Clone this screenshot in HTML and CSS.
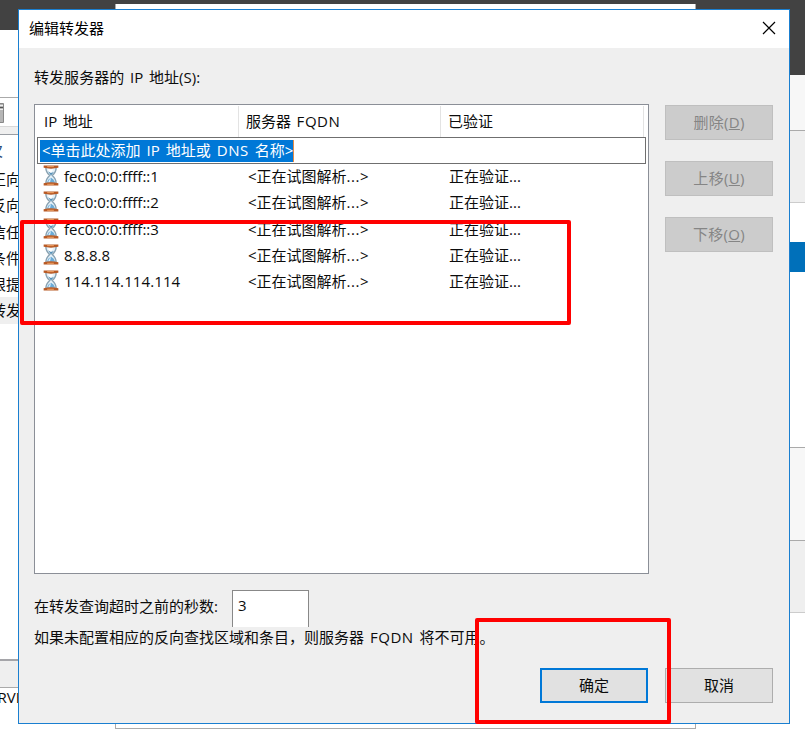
FILE: index.html
```html
<!DOCTYPE html>
<html lang="zh-CN">
<head>
<meta charset="utf-8">
<title>编辑转发器</title>
<link rel="stylesheet" href="styles.css">
</head>
<body>
<svg class="defs" width="0" height="0" aria-hidden="true">
  <symbol id="hourglass" viewBox="0 0 16 22">
    <path d="M2.6 2.5C2.6 7 4 8.600 6.600 11C4 13.400 2.600 15 2.600 19.500H13.400C13.400 15 12 13.400 9.400 11C12 8.600 13.400 7 13.400 2.500Z" fill="#e4f0f7" stroke="#8aa3b3" stroke-width="1.500"/>
    <path d="M4.500 4.500L7.500 9L10.500 4.500Z" fill="#fff"/>
    <path d="M5 6.800L8 11L11 7.300L8 8.400Z" fill="#568fb5"/>
    <path d="M3.600 18.500Q5 14.500 8 13.300Q11 14.500 12.400 18.500Z" fill="#6cabd6"/>
    <path d="M6 16Q7 14 8 13.600L7 18H5Z" fill="#d8edfa"/>
    <path d="M.3 .6H15.700V3Q8 4.600 .3 3Z" fill="#b85a25"/>
    <path d="M.3 21.400H15.700V19Q8 17.400 .3 19Z" fill="#b85a25"/>
    <path d="M4 1.700H11M4 20.200H11" stroke="#f0a468" stroke-width="1"/>
  </symbol>
</svg>
<div class="desktop">
  <div class="backdrop-bar"></div>
  <div class="back-left">
    <div class="bl-space"></div>
    <div class="bl-tools"><svg width="5" height="20" viewBox="0 0 5 20"><path d="M0 .5H3.500V19.500H0" fill="#b5b5b5" stroke="#888"/><path d="M0 2.500H3M0 6.500H3" stroke="#eee"/><path d="M0 4.500H3" stroke="#555"/></svg></div>
    <div class="bl-strip"></div>
    <div class="bl-tree">
      <div class="node lead"><span>欠</span></div>
      <div class="node"><span>正向</span></div>
      <div class="node"><span>反向</span></div>
      <div class="node"><span>信任</span></div>
      <div class="node"><span>条件</span></div>
      <div class="node"><span>根提</span></div>
      <div class="node current"><span>转发</span></div>
    </div>
    <div class="bl-status"></div>
    <div class="bl-name"><span>SERVER</span></div>
  </div>
  <div class="back-right">
    <div class="br-head"></div><div class="br-gray"></div><div class="br-white"></div><div class="br-blue"></div><div class="br-body"></div><div class="br-foot"></div><div class="br-base"></div>
  </div>
  <div class="parent-window"></div>

  <section class="dialog">
    <header class="titlebar">
      <span>编辑转发器</span>
      <svg width="14" height="14" viewBox="0 0 14 14"><path d="M1 1L13 13M13 1L1 13" stroke="#000" stroke-width="1.200"/></svg>
    </header>
    <div class="content">
      <div class="label">转发服务器的 IP 地址(S):</div>
      <div class="main">
        <div class="list">
          <div class="columns"><span>IP 地址</span><span>服务器 <b>FQDN</b></span><span>已验证</span></div>
          <div class="edit"><span>&lt;单击此处添加 IP 地址或 <b>DNS</b> 名称&gt;</span></div>
          <div class="row"><svg><use href="#hourglass"/></svg><span>fec0:0:0:ffff::1</span><span class="fq">&lt;正在试图解析<b>...</b>&gt;</span><span>正在验证...</span></div>
          <div class="row"><svg><use href="#hourglass"/></svg><span>fec0:0:0:ffff::2</span><span class="fq">&lt;正在试图解析<b>...</b>&gt;</span><span>正在验证...</span></div>
          <div class="row"><svg><use href="#hourglass"/></svg><span>fec0:0:0:ffff::3</span><span class="fq">&lt;正在试图解析<b>...</b>&gt;</span><span>正在验证...</span></div>
          <div class="row"><svg><use href="#hourglass"/></svg><span>8.8.8.8</span><span class="fq">&lt;正在试图解析<b>...</b>&gt;</span><span>正在验证...</span></div>
          <div class="row"><svg><use href="#hourglass"/></svg><span class="v4">114.114.114.114</span><span class="fq">&lt;正在试图解析<b>...</b>&gt;</span><span>正在验证...</span></div>
        </div>
        <div class="side">
          <button disabled>删除(<u>D</u>)</button>
          <button disabled>上移(<u>U</u>)</button>
          <button disabled>下移(<u>O</u>)</button>
        </div>
      </div>
      <div class="timeout"><span>在转发查询超时之前的秒数:</span><div class="seconds">3</div></div>
      <div class="note">如果未配置相应的反向查找区域和条目，则服务器 <b>FQDN</b> 将不可用。</div>
      <div class="actions"><button class="ok">确定</button><button>取消</button></div>
    </div>
  </section>
  <div class="mark mark-list"></div>
  <div class="mark mark-ok"></div>
</div>
</body>
</html>
```
FILE: styles.css
```css
* { box-sizing: border-box; }
body { margin: 0; font: 15px/20px "Open Sans", "Noto Sans CJK SC", sans-serif; color: #0c0c0c; }
b { font-weight: inherit; letter-spacing: .55px; }
.defs { position: absolute; }
.desktop { position: relative; width: 805px; height: 738px; overflow: hidden; background: #fff; }
.backdrop-bar { height: 30px; background: #424242; }

/* windows behind the dialog */
.back-left { position: absolute; left: 0; top: 30px; width: 18px; height: 708px; overflow: hidden; background: #fff; }
.bl-space { height: 67px; }
.bl-tools { height: 29px; border-top: 1px solid #aaa; padding-top: 5px; }
.bl-tools svg { display: block; }
.bl-strip { height: 9px; background: #efefef; border-top: 1px solid #d8d8d8; border-bottom: 1px solid #999da3; }
.bl-tree { height: 524px; padding-top: 2px; }
.node { height: 26.3px; line-height: 26px; white-space: nowrap; }
.node span { margin-left: -9px; }
.node.lead { color: #2a4a7a; height: 29px; line-height: 27px; }
.node.lead span { margin-left: -12px; }
.current { background: #efefef; }
.bl-status { height: 29px; background: #efefef; border-top: 2px solid #a5a5a9; border-bottom: 1px solid #aaa; }
.bl-name { white-space: nowrap; line-height: 18px; }
.bl-name span { margin-left: -19px; }

.back-right { position: absolute; left: 790px; top: 0; width: 15px; height: 738px; background: #fff; }
.back-right div { border-bottom: 1px solid #aaa; }
.back-right .br-head { height: 131px; border-top: 75px solid #424242; background: #f7f7f7; }
.back-right .br-gray { height: 72px; background: #efefef; border-color: #ccc; }
.back-right .br-white { height: 39px; border: 0; }
.back-right .br-blue { height: 30px; background: #0070ba; border: 0; }
.back-right .br-body { height: 176px; }
.back-right .br-foot { height: 93px; background: #f7f7f7; }
.back-right .br-base { height: 72px; background: #efefef; border-color: #ccc; }
.parent-window { position: absolute; left: 115px; top: 4px; width: 581px; height: 725px; background: #fff; border: 1px solid #aaa; border-top: 0; }

/* forwarder dialog */
.dialog { position: absolute; left: 18px; top: 9px; width: 772px; height: 715px; border: 1px solid #1a7fd0; background: #efefef; }
.titlebar { height: 38px; background: #fff; color: #000; display: flex; align-items: center; justify-content: space-between; padding: 0 13px 2px 10px; }
.content { padding: 19px 16px 0 15px; }
.label { height: 37px; white-space: nowrap; word-spacing: 1.7px; letter-spacing: .05px; }
.main { display: flex; justify-content: space-between; }
.list { width: 615px; height: 470px; background: #fff; border: 1px solid #8b8f97; padding: 1px 2px; }
.columns { display: grid; grid-template-columns: 202px 202px 203px; height: 31px; line-height: 30px; word-spacing: 1.7px; }
.columns span { padding-left: 7px; border-right: 1px solid #e3e3e3; }
.edit { height: 27px; border: 1px solid #6f6f6f; padding: 2px; display: flex; }
.edit span { background: #0078d7; color: #fff; border-right: 1px solid #e58b45; line-height: 20px; padding-left: 2px; height: 22px; white-space: nowrap; word-spacing: 2.1px; }
.row { display: grid; grid-template-columns: 27px 183px 202px 1fr; height: 26.3px; line-height: 24px; white-space: nowrap; }
.row svg { width: 16px; height: 21px; margin: 1px 0 0 6px; }
.v4 { letter-spacing: .1px; }
.fq { padding-left: 1px; }
.side { display: grid; gap: 21px; align-content: start; padding-top: 1px; }
button { width: 108px; height: 35px; border: 1px solid #adadad; background: #e1e1e1; color: #0c0c0c; font: inherit; padding: 0 0 2px; }
button:disabled { background: #ccc; border-color: #bfbfbf; color: #858585; letter-spacing: .3px; }
.timeout { display: flex; height: 53px; padding-top: 16px; }
.timeout span { width: 198px; padding-top: 6px; }
.seconds { width: 77px; height: 37px; border: 1px solid #888; border-bottom: 0; background: #fff; padding: 4px 5px; }
.note { white-space: nowrap; word-spacing: 2px; }
.actions { display: flex; justify-content: flex-end; gap: 17px; padding-top: 21px; }
.actions .ok { border: 2px solid #0078d7; }

/* highlight frames */
.mark { position: absolute; border: 4px solid #f00; border-radius: 2px; }
.mark-list { left: 20px; top: 220px; width: 551px; height: 105px; }
.mark-ok { left: 475px; top: 618px; width: 196px; height: 106px; }
```
